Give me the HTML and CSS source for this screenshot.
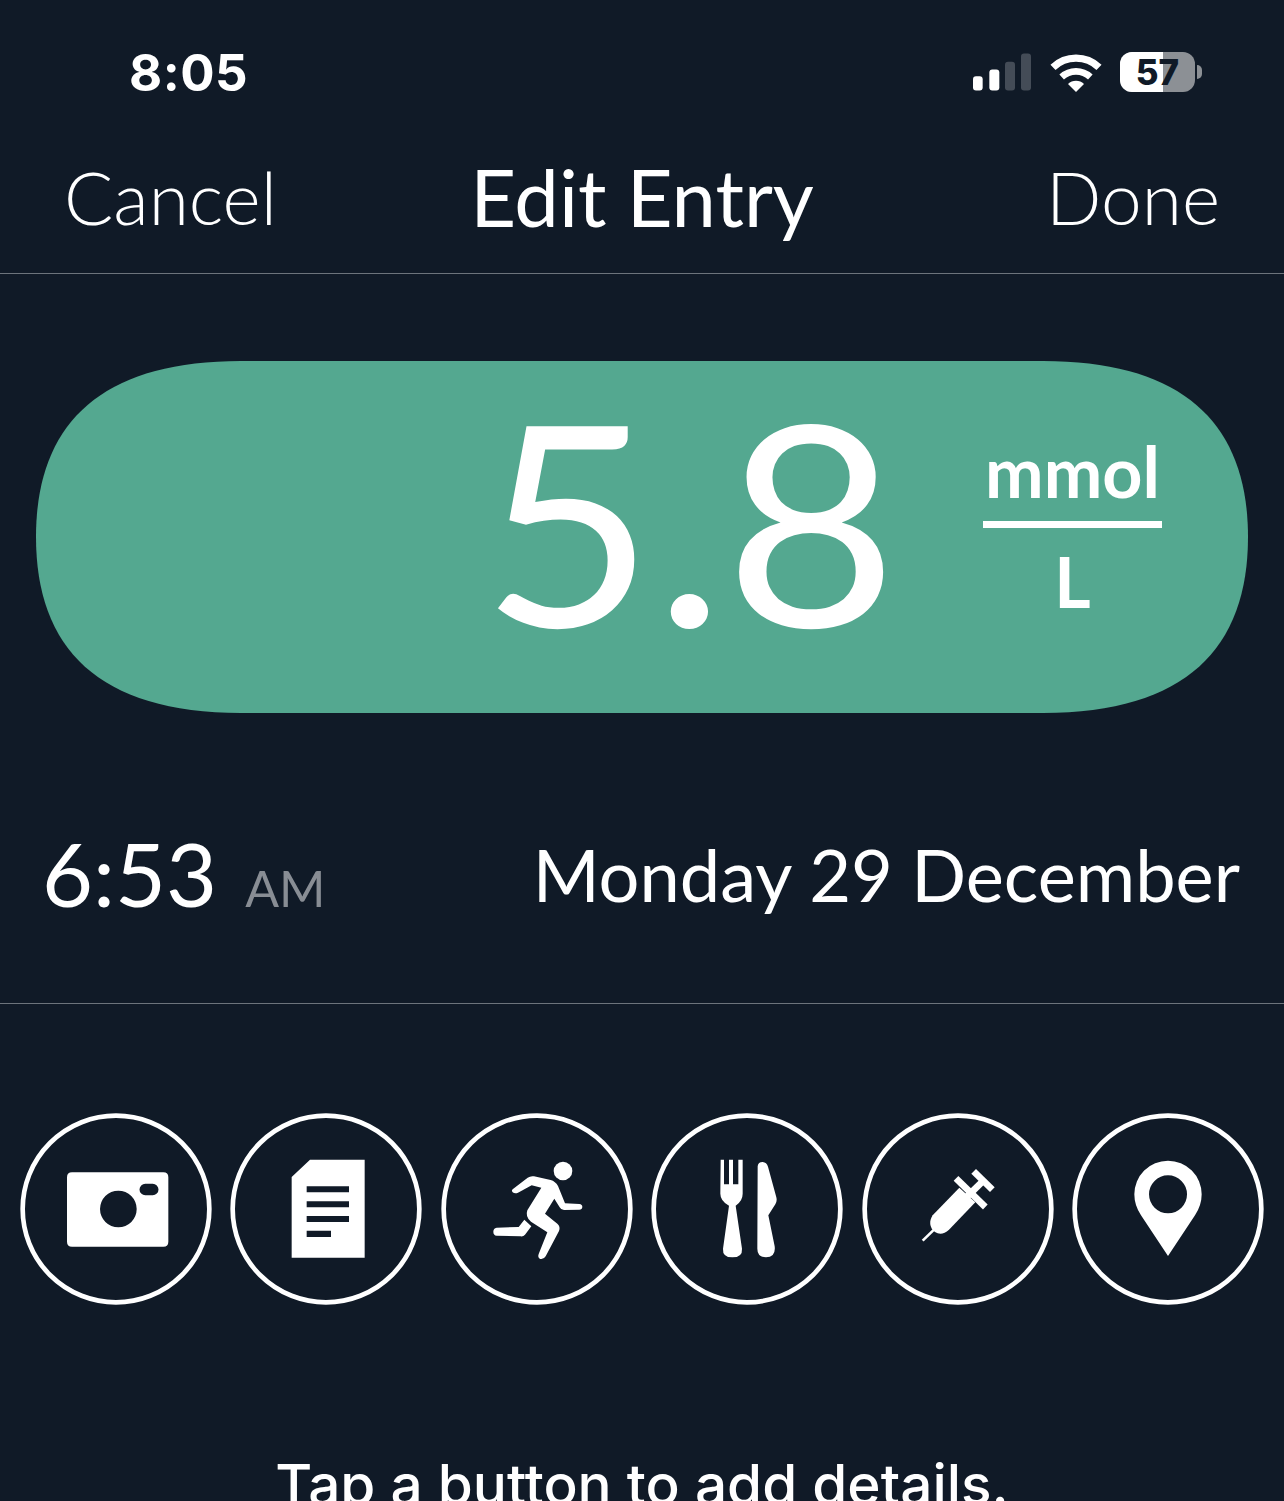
FILE: index.html
```html
<!DOCTYPE html>
<html lang="en">
<head>
    <meta charset="UTF-8">
    <title>Edit Entry</title>
    <link rel="stylesheet" href="styles.css">
</head>
<body>
    <!-- status bar -->
    <div class="status-bar">
        <span class="clock">8:05</span>
        <div class="status-icons">
            <svg class="signal" width="58" height="40" viewBox="99 72 174 111">
                <rect x="99" y="140" width="29" height="43" rx="9" fill="#fff"/>
                <rect x="148" y="120" width="30" height="63" rx="9" fill="#fff"/>
                <rect x="195" y="97" width="30" height="86" rx="9" fill="#444c57"/>
                <rect x="243" y="72" width="30" height="111" rx="9" fill="#444c57"/>
            </svg>
            <svg class="wifi" width="52" height="38" viewBox="327 70 156 114">
                <path d="M336 110A100 100 0 0 1 474 110" fill="none" stroke="#fff" stroke-width="22"/>
                <path d="M362 139A63 63 0 0 1 448 139" fill="none" stroke="#fff" stroke-width="20"/>
                <path d="M405 184L381 160A35 35 0 0 1 429 160Z" fill="#fff"/>
            </svg>
            <div class="battery">
                <div class="battery-body">
                    <div class="battery-level" style="width: 57%"></div>
                    <span class="battery-text">57</span>
                </div>
                <div class="battery-nub"></div>
            </div>
        </div>
    </div>

    <!-- nav -->
    <div class="nav">
        <span class="nav-cancel">Cancel</span>
        <span class="nav-title">Edit Entry</span>
        <span class="nav-done">Done</span>
    </div>

    <!-- reading -->
    <div class="reading">
        <div class="pill">
            <span class="value">5.8</span>
            <div class="unit">
                <span class="unit-top">mmol</span>
                <span class="unit-bottom">L</span>
            </div>
        </div>
        <div class="when">
            <div class="time">6:53<span class="ampm">AM</span></div>
            <div class="date">Monday 29 December</div>
        </div>
    </div>

    <!-- buttons -->
    <div class="actions">
        <div class="buttons">
            <svg class="circle-btn" viewBox="58 38 576 576">
                <circle cx="346" cy="326" r="280"/>
                <path class="fill" fill-rule="evenodd" d="M214 216H488Q503 216 503 231V424Q503 439 488 439H214Q199 439 199 424V231Q199 216 214 216ZM353 271A55 55 0 1 0 353.1 381A55 55 0 1 0 353 271ZM434 250A17 17 0 0 0 434 285H456A17 17 0 0 0 456 250Z"/>
            </svg>
            <svg class="circle-btn" viewBox="690 38 576 576">
                <circle cx="978" cy="326" r="280"/>
                <path class="fill" fill-rule="evenodd" d="M930 178H1094V472H875V230ZM920 258V276H1047V258ZM920 303V321H1047V303ZM920 347V365H1047V347ZM920 391V410H993V391Z"/>
            </svg>
            <svg class="circle-btn" viewBox="33 38 576 576">
                <circle cx="321" cy="326" r="280"/>
                <circle class="fill" cx="399" cy="212" r="28"/>
                <path class="fill" d="M249 266L293 232Q302 226 312 228L362 239Q376 243 384 257L405 309L448 311Q457 312 457 320Q456 328 448 328L402 329Q393 329 389 321L373 295L345 340L382 370Q392 379 387 392L347 468Q341 478 331 476Q322 472 326 461L352 396L303 364Q285 350 292 330L334 262L305 255L264 277Q255 281 248 276Q243 270 249 266Z"/>
                <path class="fill" d="M283 358L304 378L285 403Q280 409 272 408L200 406Q190 405 190 394Q190 383 200 382L266 380Z"/>
            </svg>
            <svg class="circle-btn" viewBox="665 38 576 576">
                <circle cx="953" cy="326" r="280"/>
                <path class="fill" d="M874 178H884V252H899V178H911V252H927V178H940V280Q940 302 919 316L938 445Q940 471 909 471Q879 471 881 445L899 316Q873 302 873 280Z"/>
                <path class="fill" d="M985 198Q986 185 1000 185Q1012 186 1016 199L1041 291Q1044 302 1038 312L1017 345L1036 438Q1040 471 1010 471Q984 470 984 445Z"/>
            </svg>
            <svg class="circle-btn" viewBox="26 38 576 576">
                <circle cx="314" cy="326" r="280"/>
                <path class="fill" d="M318 262L366 306L287 388Q265 408 245 395Q220 375 238 345Z"/>
                <path class="line" d="M208 421L242 388" stroke-width="8"/>
                <path class="line" d="M308 234L396 320" stroke-width="20"/>
                <path class="line" d="M340 290L388 243" stroke-width="20"/>
                <path class="line" d="M361 213L417 268" stroke-width="20"/>
            </svg>
            <svg class="circle-btn" viewBox="656 38 576 576">
                <circle cx="944" cy="326" r="280"/>
                <path class="fill" fill-rule="evenodd" d="M944 181A101 101 0 0 1 1045 282Q1045 315 1025 345L944 467L863 345Q843 315 843 282A101 101 0 0 1 944 181ZM944 225A57 57 0 1 0 944.1 339A57 57 0 1 0 944 225Z"/>
            </svg>
        </div>
        <p class="hint">Tap a button to add details.</p>
    </div>
</body>
</html>
```

FILE: styles.css
```css
html, body {
    height: 1501px;
    overflow: hidden;
}
body {
    margin: 0;
    background-color: #101a27;
    color: white;
    font-family: "Lato", "Open Sans", sans-serif;
}

/* status bar */
.status-bar {
    height: 142px;
    box-sizing: border-box;
    padding: 48px 82px 0 129px;
    display: flex;
    justify-content: space-between;
    align-items: flex-start;
}
.clock {
    font-family: "Inter", sans-serif;
    font-size: 51px;
    font-weight: 700;
    line-height: 50px;
    letter-spacing: 0.5px;
}
.status-icons {
    display: flex;
    align-items: flex-end;
    height: 44px;
}
.signal {
    margin-right: 19px;
}
.wifi {
    margin-right: 18px;
}
.battery {
    display: flex;
    align-items: center;
}
.battery-body {
    position: relative;
    width: 75px;
    height: 40px;
    border-radius: 12px;
    background-color: #8c9095;
    overflow: hidden;
    display: flex;
    align-items: center;
    justify-content: center;
}
.battery-level {
    position: absolute;
    left: 0;
    top: 0;
    height: 100%;
    background-color: white;
}
.battery-text {
    position: relative;
    font-family: "Inter", sans-serif;
    font-size: 35px;
    font-weight: 800;
    line-height: 40px;
    color: #101a27;
}
.battery-nub {
    width: 5px;
    height: 14px;
    margin-left: 2px;
    background-color: #8c9095;
    border-radius: 0 7px 7px 0;
}

/* nav */
.nav {
    height: 109px;
    padding: 0 64px 22px 64px;
    display: flex;
    justify-content: space-between;
    align-items: center;
    border-bottom: 1px solid #6d747c;
    font-weight: 300;
}
.nav-cancel,
.nav-done {
    font-size: 73px;
    width: 240px;
}
.nav-done {
    text-align: right;
}
.nav-title {
    font-size: 79.5px;
    font-weight: 400;
}

/* reading */
.reading {
    padding: 87px 36px 0;
    height: 642px;
    border-bottom: 1px solid #6d747c;
}
.pill {
    height: 352px;
    background-color: #54a890;
    clip-path: path("M0 176C0 65 62 0 205 0H1007C1150 0 1212 65 1212 176C1212 287 1150 352 1007 352H205C62 352 0 287 0 176Z");
    display: flex;
    justify-content: flex-end;
    align-items: center;
    padding-right: 86px;
}
.value {
    font-size: 280px;
    font-weight: 400;
    line-height: 352px;
    margin: 0 98px 36px 0;
    transform: scaleX(1.065);
}
.unit {
    width: 179px;
    margin-bottom: 22px;
    display: flex;
    flex-direction: column;
    align-items: center;
    font-size: 70px;
    font-weight: 700;
}
.unit-top {
    width: 100%;
    text-align: center;
    line-height: 80px;
    border-bottom: 7px solid white;
    padding-bottom: 10px;
}
.unit-bottom {
    line-height: 80px;
    padding-top: 13px;
}
.when {
    display: flex;
    justify-content: space-between;
    align-items: flex-start;
    margin: 107px 8px 0 6px;
}
.time {
    font-size: 88px;
}
.ampm {
    font-size: 50px;
    color: #888d94;
    margin-left: 28px;
}
.date {
    font-size: 72.2px;
    margin-top: 11px;
}

/* buttons */
.actions {
    padding: 109px 20px 0;
}
.buttons {
    display: flex;
    justify-content: space-between;
}
.circle-btn {
    width: 192px;
    height: 192px;
}
.circle-btn circle {
    fill: none;
    stroke: white;
    stroke-width: 14;
}
.circle-btn .fill,
.circle-btn circle.fill {
    fill: white;
    stroke: none;
}
.circle-btn .line {
    fill: none;
    stroke: white;
}
.hint {
    margin: 150px 0 0;
    text-align: center;
    font-family: "Inter", sans-serif;
    font-size: 56.7px;
    font-weight: 500;
    line-height: 60px;
}
```
